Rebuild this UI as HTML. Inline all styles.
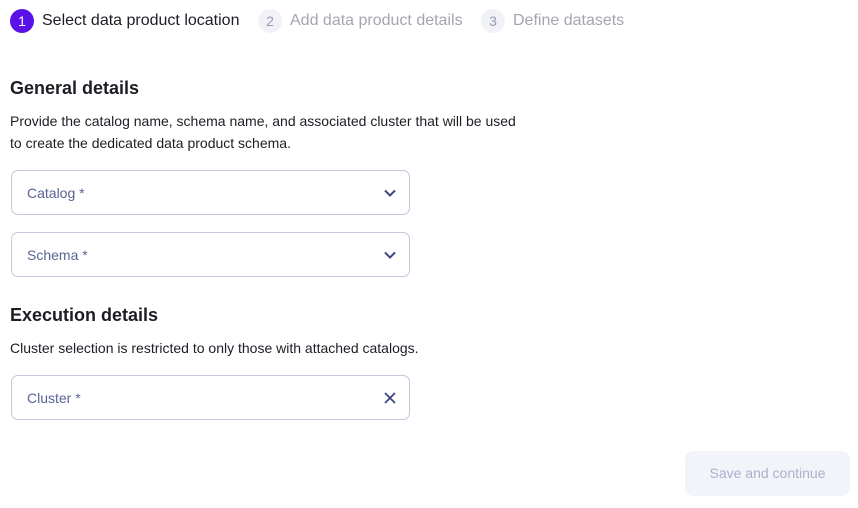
<!DOCTYPE html>
<html><head><style>
*{margin:0;padding:0;box-sizing:border-box}
body{width:858px;height:508px;background:#fff;font-family:"Liberation Sans",sans-serif;position:relative;overflow:hidden;color:#1d1d25}
.a{position:absolute;white-space:nowrap}
.c{position:absolute;width:24px;height:24px;border-radius:50%;text-align:center;line-height:24px;font-size:14px}
.f{position:absolute;left:11px;width:399px;height:45px;border:1.5px solid #c3c8de;border-radius:7px}
.f span{position:absolute;left:15px;top:14px;font-size:14px;color:#5a6395}
.f svg{position:absolute;right:12px;top:15px}
</style></head><body>
<div class="c" style="left:10px;top:9px;background:#5b12ea;color:#fff">1</div>
<div class="a" style="left:42px;top:12px;font-size:16px;color:#1d1d25">Select data product location</div>
<div class="c" style="left:258px;top:9px;background:#f1f2f7;color:#9a9cac">2</div>
<div class="a" style="left:290px;top:12px;font-size:16px;color:#a3a5b2">Add data product details</div>
<div class="c" style="left:481px;top:9px;background:#f1f2f7;color:#9a9cac">3</div>
<div class="a" style="left:513px;top:12px;font-size:16px;color:#a3a5b2">Define datasets</div>
<div class="a" style="left:10px;top:78px;font-size:18px;font-weight:600">General details</div>
<div class="a" style="left:10px;top:110px;font-size:14px;line-height:22px">Provide the catalog name, schema name, and associated cluster that will be used<br>to create the dedicated data product schema.</div>
<div class="f" style="top:170px"><span>Catalog *</span><svg width="14" height="14" viewBox="0 0 14 14"><path d="M2 4.5l5 5 5-5" fill="none" stroke="#3c4680" stroke-width="2"/></svg></div>
<div class="f" style="top:232px"><span>Schema *</span><svg width="14" height="14" viewBox="0 0 14 14"><path d="M2 4.5l5 5 5-5" fill="none" stroke="#3c4680" stroke-width="2"/></svg></div>
<div class="a" style="left:10px;top:305px;font-size:18px;font-weight:600">Execution details</div>
<div class="a" style="left:10px;top:340px;font-size:14px">Cluster selection is restricted to only those with attached catalogs.</div>
<div class="f" style="top:375px"><span>Cluster *</span><svg width="14" height="14" viewBox="0 0 14 14"><path d="M2 2l10 10M12 2L2 12" fill="none" stroke="#3c4680" stroke-width="1.8"/></svg></div>
<div class="a" style="left:685px;top:451px;width:165px;height:45px;background:#f3f4f9;border-radius:8px;text-align:center;line-height:45px;font-size:14px;color:#abb1cc">Save and continue</div>
</body></html>
